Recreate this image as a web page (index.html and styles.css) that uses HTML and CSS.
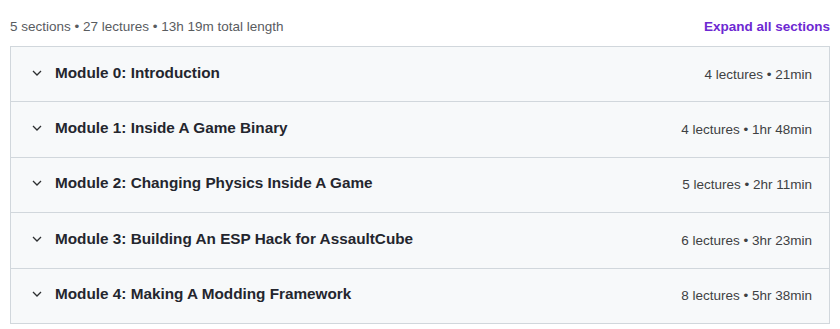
FILE: index.html
```html
<!DOCTYPE html>
<html>
  <head>
    <title>Course content</title>
    <meta charset="utf-8">
    <link rel="stylesheet" href="styles.css">
  </head>
  <body>
    <div class="cabecera">
      <span class="resumen">5 sections • 27 lectures • 13h 19m total length</span>
      <a class="expandir" href="#">Expand all sections</a>
    </div>
    <div class="secciones">
      <div class="seccion">
        <svg class="flecha" viewBox="0 0 10 6" width="10" height="6"><path d="M1 1l4 4 4-4" fill="none" stroke="#2d2f31" stroke-width="1.3"/></svg>
        <span class="titulo">Module 0: Introduction</span>
        <span class="datos">4 lectures • 21min</span>
      </div>
      <div class="seccion">
        <svg class="flecha" viewBox="0 0 10 6" width="10" height="6"><path d="M1 1l4 4 4-4" fill="none" stroke="#2d2f31" stroke-width="1.3"/></svg>
        <span class="titulo">Module 1: Inside A Game Binary</span>
        <span class="datos">4 lectures • 1hr 48min</span>
      </div>
      <div class="seccion">
        <svg class="flecha" viewBox="0 0 10 6" width="10" height="6"><path d="M1 1l4 4 4-4" fill="none" stroke="#2d2f31" stroke-width="1.3"/></svg>
        <span class="titulo">Module 2: Changing Physics Inside A Game</span>
        <span class="datos">5 lectures • 2hr 11min</span>
      </div>
      <div class="seccion">
        <svg class="flecha" viewBox="0 0 10 6" width="10" height="6"><path d="M1 1l4 4 4-4" fill="none" stroke="#2d2f31" stroke-width="1.3"/></svg>
        <span class="titulo">Module 3: Building An ESP Hack for AssaultCube</span>
        <span class="datos">6 lectures • 3hr 23min</span>
      </div>
      <div class="seccion">
        <svg class="flecha" viewBox="0 0 10 6" width="10" height="6"><path d="M1 1l4 4 4-4" fill="none" stroke="#2d2f31" stroke-width="1.3"/></svg>
        <span class="titulo">Module 4: Making A Modding Framework</span>
        <span class="datos">8 lectures • 5hr 38min</span>
      </div>
    </div>
  </body>
</html>
```

FILE: styles.css
```css
* {font-family: 'Liberation Sans', Arial, sans-serif; box-sizing: border-box;}
body {margin: 0; padding: 0 10px; background: #fff; color: #2d2f31;}
.cabecera {display: flex; justify-content: space-between; align-items: center; height: 46px; padding-top: 6px;}
.resumen {font-size: 13.5px; color: #595c5f;}
.expandir {font-size: 13.5px; font-weight: bold; color: #6d28d2; text-decoration: none;}
.secciones {border: 1px solid #d1d7dc; width: 820px;}
.seccion {display: flex; align-items: center; height: 55.4px; padding: 0 17px 0 21px; background: #f7f9fa; border-top: 1px solid #d1d7dc;}
.seccion:first-child {border-top: none; height: 54.4px;}
.flecha {margin: 0 13px 3px 0; flex-shrink: 0;}
.titulo {font-size: 15.3px; font-weight: bold; flex: 1; margin-bottom: 3px; color: #24262e;}
.datos {font-size: 13.5px; color: #3e4143;}
```
